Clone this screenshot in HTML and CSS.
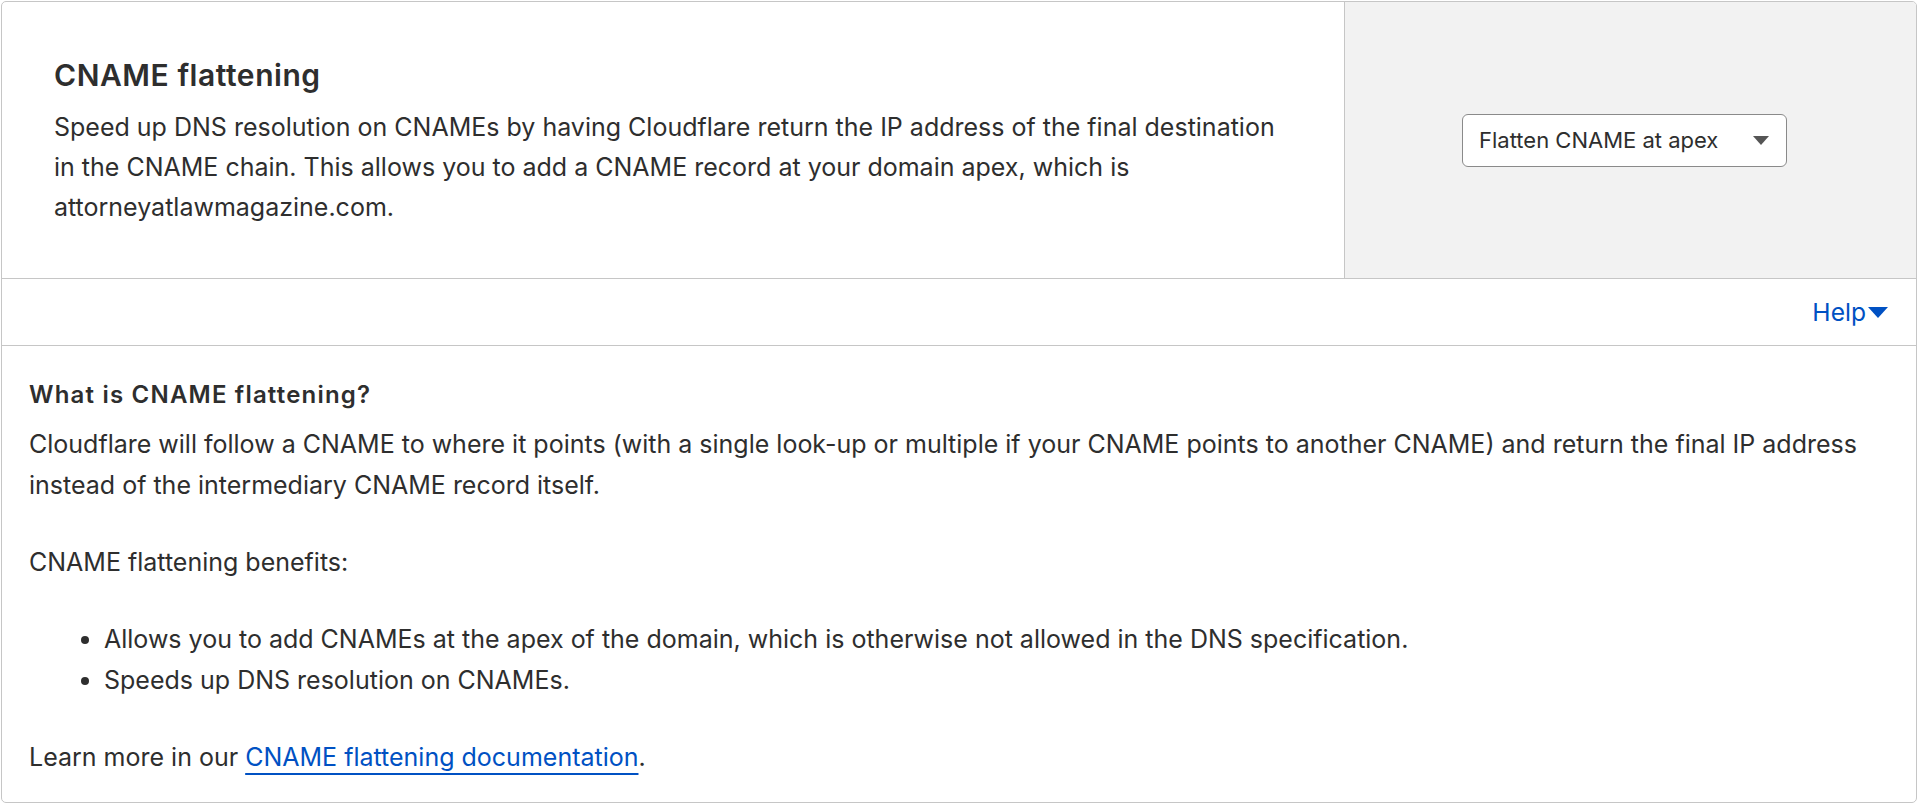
FILE: index.html
```html
<!DOCTYPE html>
<html lang="en">
<head>
<meta charset="utf-8">
<title>CNAME flattening</title>
<link rel="stylesheet" href="styles.css">
</head>
<body>
<div class="card">
  <div class="setting">
    <div class="setting-text">
      <h3 class="setting-title">CNAME flattening</h3>
      <p class="setting-desc">Speed up DNS resolution on CNAMEs by having Cloudflare return the IP address of the final destination in the CNAME chain. This allows you to add a CNAME record at your domain apex, which is attorneyatlawmagazine.com.</p>
    </div>
    <div class="setting-control">
      <div class="select">
        <span class="select-value">Flatten CNAME at apex</span>
        <svg class="select-arrow" width="16" height="9" viewBox="0 0 16 9"><path d="M0 0h16L8 9z" fill="#555"/></svg>
      </div>
    </div>
  </div>
  <div class="help-bar">
    <a class="help-toggle" href="#">Help<svg class="help-arrow" width="20" height="11" viewBox="0 0 20 11"><path d="M0 0h20L10 11z" fill="#0051c3"/></svg></a>
  </div>
  <div class="help-body">
    <h4 class="help-title">What is CNAME flattening?</h4>
    <p class="help-p">Cloudflare will follow a CNAME to where it points (with a single look-up or multiple if your CNAME points to another CNAME) and return the final IP address instead of the intermediary CNAME record itself.</p>
    <p class="help-p">CNAME flattening benefits:</p>
    <ul class="help-list">
      <li>Allows you to add CNAMEs at the apex of the domain, which is otherwise not allowed in the DNS specification.</li>
      <li>Speeds up DNS resolution on CNAMEs.</li>
    </ul>
    <p class="help-p last">Learn more in our <a class="doc-link" href="#">CNAME flattening documentation</a>.</p>
  </div>
</div>
</body>
</html>
```
FILE: styles.css
```css
html, body {
  margin: 0;
  padding: 0;
  background: #ffffff;
}
body {
  font-family: Inter, "Noto Sans", "Liberation Sans", sans-serif;
  color: #2e2e2e;
  font-size: 25px;
  line-height: 41px;
}
.card {
  margin: 1px 3px 0 1px;
  border: 1px solid #c6c6c6;
  border-radius: 5px;
  height: 802px;
  box-sizing: border-box;
  overflow: hidden;
  display: flex;
  flex-direction: column;
}
.setting {
  display: flex;
  height: 276px;
  border-bottom: 1px solid #c6c6c6;
}
.setting-text {
  flex: 0 0 1342px;
  box-sizing: border-box;
  padding: 4px 40px 0 52px;
  display: flex;
  flex-direction: column;
  justify-content: center;
}
.setting-title {
  margin: 0 0 14px;
  font-size: 30px;
  line-height: 36px;
  font-weight: 600;
  letter-spacing: 0.55px;
}
.setting-desc {
  margin: 0;
  max-width: 1232px;
  line-height: 40px;
}
.setting-control {
  flex: 1;
  background: #f2f2f2;
  border-left: 1px solid #c6c6c6;
  display: flex;
  align-items: center;
  justify-content: center;
}
.select {
  width: 325px;
  height: 53px;
  box-sizing: border-box;
  border: 1px solid #8a8a8a;
  border-radius: 6px;
  background: #fff;
  display: flex;
  align-items: center;
  justify-content: space-between;
  padding: 0 17px 0 16px;
  margin-right: 12px;
}
.select-value {
  font-size: 22px;
}
.help-bar {
  height: 66px;
  border-bottom: 1px solid #c6c6c6;
  display: flex;
  align-items: center;
  justify-content: flex-end;
  padding-right: 28px;
}
.help-toggle {
  color: #0051c3;
  text-decoration: none;
  display: flex;
  align-items: center;
  gap: 2px;
  font-size: 24.6px;
}
.help-body {
  padding: 28px 27px 0 27px;
}
.help-title {
  margin: 0 0 9px;
  font-size: 24px;
  font-weight: 600;
  letter-spacing: 1.2px;
}
.help-p {
  margin: 0 0 36px;
}
.help-p.last {
  margin: 0;
}
.help-list {
  margin: 0 0 36px;
  padding-left: 75px;
}
.doc-link {
  color: #0051c3;
  text-decoration: underline;
  text-decoration-thickness: 2px;
  text-underline-offset: 7px;
}
```
